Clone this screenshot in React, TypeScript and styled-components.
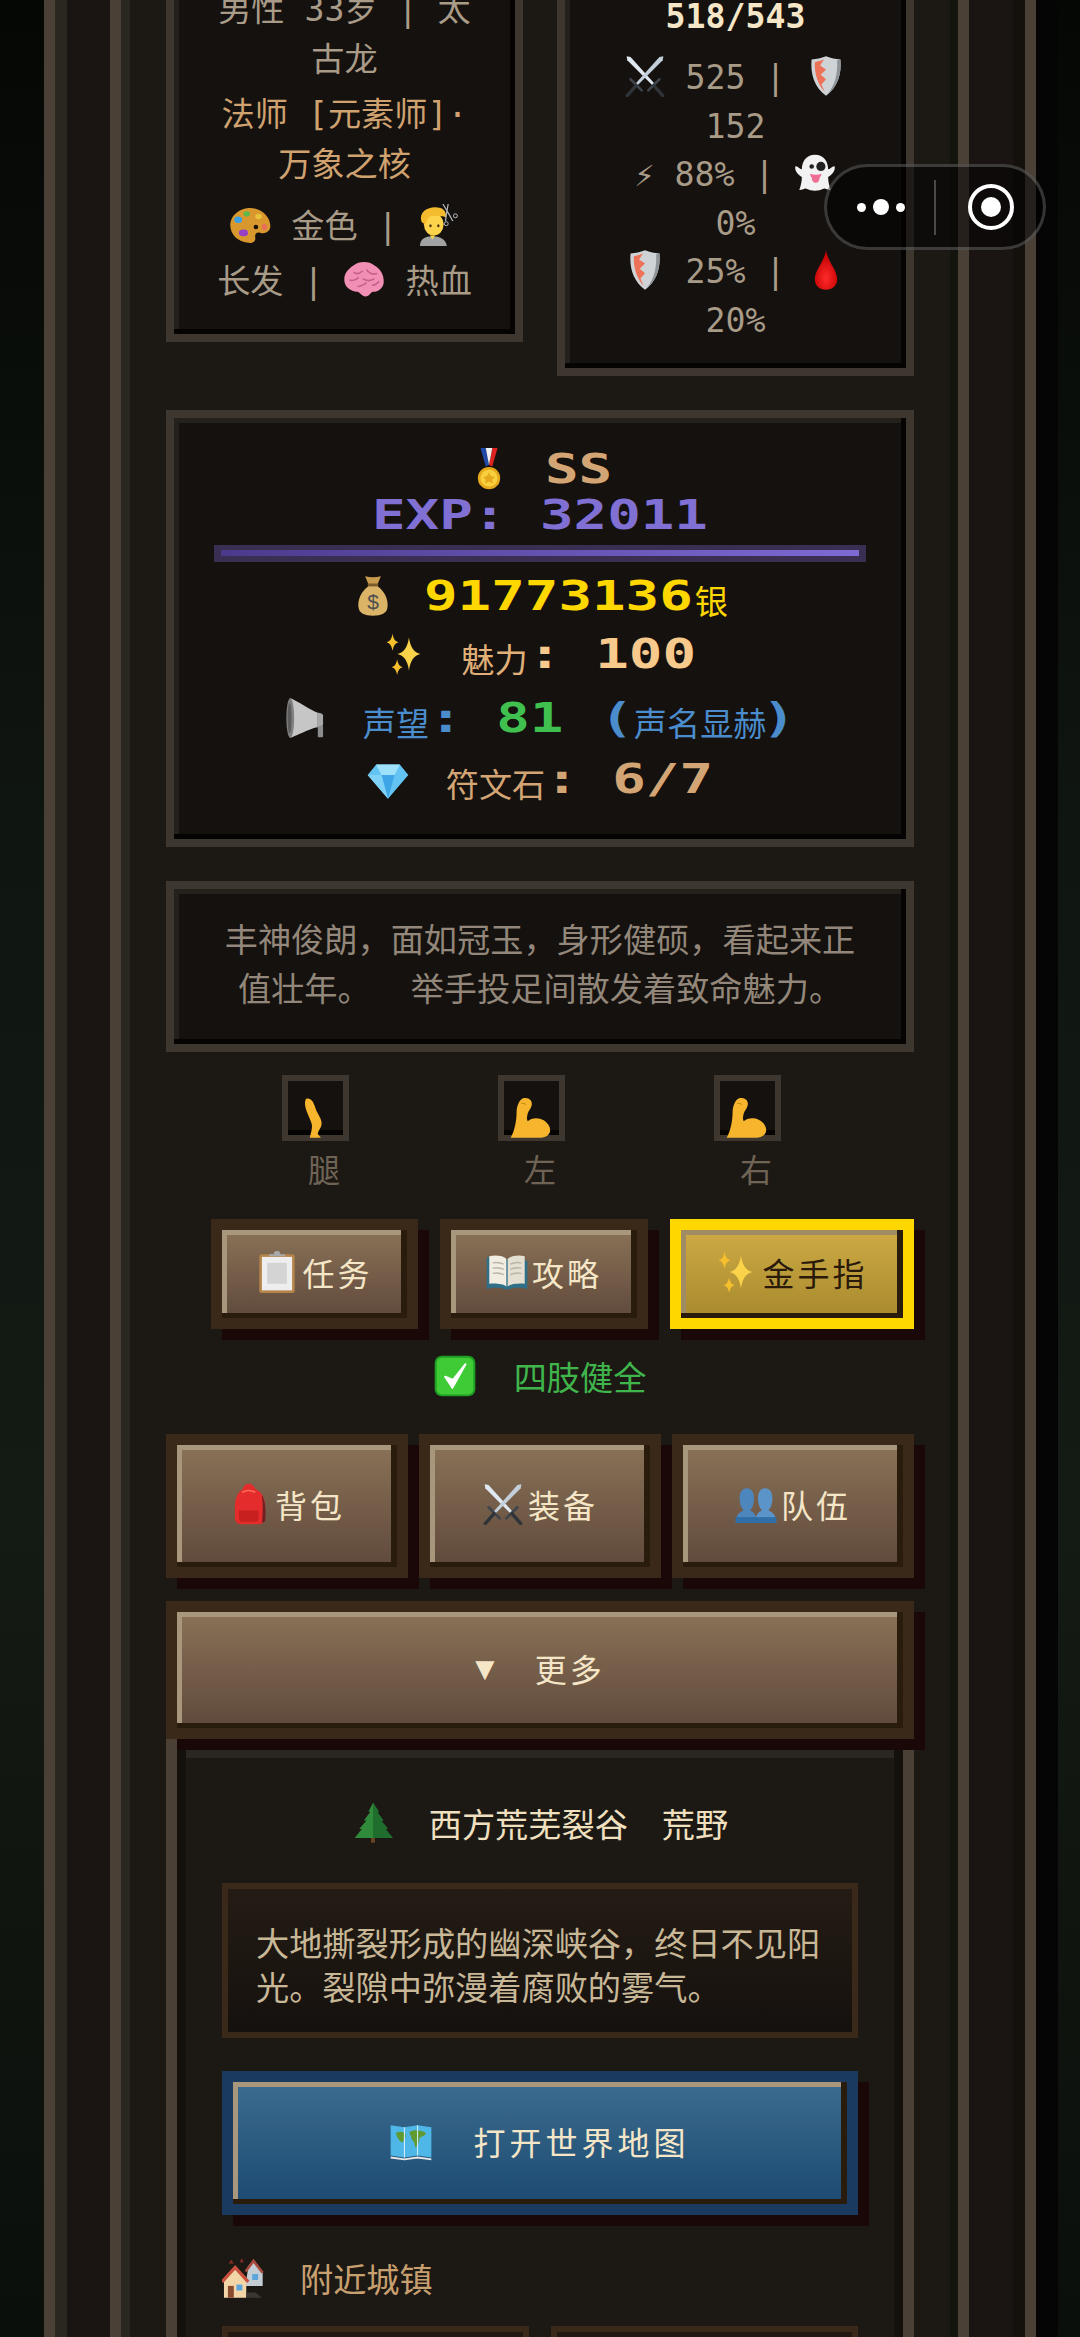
import React from "react";
import styled, { createGlobalStyle } from "styled-components";

const Global = createGlobalStyle`
  html, body { margin: 0; padding: 0; background: #0b0f0b; }
  * { box-sizing: border-box; }
`;

const FONT = `"DejaVu Sans Mono", "Noto Sans CJK SC", monospace`;

const Viewport = styled.div`
  position: relative;
  width: 1080px;
  height: 2337px;
  overflow: hidden;
  padding-left: 44px;
  font-family: ${FONT};
  font-size: 33.2px;
  background: linear-gradient(180deg, #050705 0%, #0f1510 35%, #141a14 65%, #0b0f0b 100%);
`;
const OuterFrame = styled.div`
  width: 992px;
  height: 2800px;
  margin-top: -200px;
  padding: 0 55px;
  background: #1a1412;
  border: 11px solid #4a4036;
  box-shadow: 22px 0 0 #050505, inset 12px 0 0 #2a2620, inset -12px 0 0 #14100c;
`;
const InnerFrame = styled.div`
  width: 859px;
  height: 2800px;
  padding: 118px 44px 0 45px;
  background: #1c1814;
  border: 11px solid #4a4036;
  box-shadow: inset 9px 0 0 #2a2620, inset -8px 0 0 #14140e;
`;
const TopGrid = styled.div`
  display: grid;
  grid-template-columns: 357px 357px;
  gap: 34px;
  align-items: start;
`;
const Panel = styled.div`
  border: 8px solid #3d3730;
  background: #15110e;
  box-shadow: inset -5px -5px 0 #060403, inset 5px 5px 0 #24201b;
`;
const HeroPanel = styled(Panel)`
  padding: 37px 0 27px;
  text-align: center;
  color: #a89b88;
  white-space: pre;
`;
const StatsPanel = styled(Panel)`
  padding: 44px 0 22.5px;
  text-align: center;
  color: #a89b88;
  white-space: pre;
`;
const Line = styled.div<{ $lh?: number; $mt?: number; $color?: string; $bold?: boolean }>`
  line-height: ${(p) => p.$lh ?? 50}px;
  height: ${(p) => p.$lh ?? 50}px;
  margin-top: ${(p) => p.$mt ?? 0}px;
  color: ${(p) => p.$color ?? "inherit"};
  font-weight: ${(p) => (p.$bold ? 700 : 400)};
`;
const EmojiSvg = styled.svg`
  display: inline-block;
  vertical-align: -8px;
  flex: none;
`;
const WealthPanel = styled(Panel)`
  margin-top: 34px;
  height: 437px;
  padding-top: 28px;
`;
const PixelRow = styled.div<{ $h?: number; $mt?: number; $gap?: number; $color?: string }>`
  display: flex;
  align-items: center;
  justify-content: center;
  height: ${(p) => p.$h ?? 60}px;
  margin-top: ${(p) => p.$mt ?? 0}px;
  gap: ${(p) => p.$gap ?? 0}px;
  color: ${(p) => p.$color ?? "#d4a574"};
`;
const Pixel = styled.span<{ $n: number; $color?: string; $ml?: number }>`
  display: block;
  flex: none;
  width: ${(p) => p.$n * 33.6}px;
  margin-left: ${(p) => p.$ml ?? 0}px;
  font-size: 40px;
  font-weight: 700;
  line-height: 46px;
  white-space: pre;
  color: ${(p) => p.$color ?? "inherit"};
  transform: scaleX(1.395);
  transform-origin: left center;
`;
const PixelTone = styled.span<{ $color: string }>`
  color: ${(p) => p.$color};
`;
const PixelLabel = styled.span<{ $ml?: number; $color?: string }>`
  flex: none;
  margin-top: 14px;
  margin-left: ${(p) => p.$ml ?? 0}px;
  line-height: 46px;
  color: ${(p) => p.$color ?? "inherit"};
  white-space: pre;
`;
const ExpBar = styled.div`
  width: 652px;
  height: 17px;
  margin: 7px auto 4px;
  padding: 5px 7px;
  background: #3a2e52;
`;
const ExpFill = styled.div`
  height: 6px;
  background: linear-gradient(90deg, #4b3a8c, #7d6ad4);
`;
const DescPanel = styled(Panel)`
  margin-top: 34px;
  height: 171px;
  padding-top: 27px;
  text-align: center;
  color: #92877a;
  line-height: 49px;
  white-space: pre;
`;
const LimbRow = styled.div`
  display: flex;
  justify-content: center;
  margin-top: 23px;
`;
const LimbCol = styled.div`
  width: 216px;
  display: flex;
  flex-direction: column;
  align-items: center;
`;
const LimbSlot = styled.div`
  width: 67px;
  height: 66px;
  margin-right: 18px;
  border: 6px solid #3d3730;
  background: #15110e;
  box-shadow: inset 0 -5px 0 #060403;
  display: flex;
  align-items: flex-end;
  justify-content: center;
  & > svg {
    margin-bottom: -4px;
  }
`;
const LimbLabel = styled.div`
  margin-top: 5px;
  line-height: 50px;
  font-size: 32px;
  color: #6e6354;
`;
const QuickRow = styled.div`
  display: flex;
  justify-content: flex-end;
  gap: 22px;
  margin-top: 23px;
`;
const Btn = styled.button<{ $w?: number; $h: number; $kind?: "gold" | "blue"; $ls?: number }>`
  position: relative;
  z-index: 1;
  flex: none;
  display: flex;
  align-items: center;
  justify-content: center;
  width: ${(p) => (p.$w ? `${p.$w}px` : "100%")};
  height: ${(p) => p.$h}px;
  padding: 0 0 4px;
  font-family: ${FONT};
  font-size: 32px;
  letter-spacing: ${(p) => p.$ls ?? 3}px;
  white-space: pre;
  color: ${(p) => (p.$kind === "gold" ? "#2a1a0a" : "#f5e6c8")};
  border: 11px solid ${(p) => (p.$kind === "gold" ? "#ffd700" : p.$kind === "blue" ? "#1a3a60" : "#3a2818")};
  background: ${(p) =>
    p.$kind === "gold"
      ? "linear-gradient(180deg, #cdaa44, #a88a2e)"
      : p.$kind === "blue"
      ? "linear-gradient(180deg, #3c6c8e, #1c4a72)"
      : "linear-gradient(180deg, #8a7257, #5f493b)"};
  box-shadow: inset -6px -5px 0 #2a1c0c,
    inset 5px 5px 0 ${(p) => (p.$kind === "gold" ? "#a08c64" : "#a8977c")}, 11px 11px 0 #1a0808;
`;
const BtnLabel = styled.span<{ $ml?: number }>`
  margin-left: ${(p) => p.$ml ?? 4}px;
`;
const Arrow = styled.span`
  font-size: 32px;
  letter-spacing: 0;
`;
const StatusRow = styled.div`
  display: flex;
  align-items: center;
  justify-content: center;
  gap: 38px;
  height: 50px;
  margin-top: 22px;
  color: #3fb54c;
`;
const MenuGrid = styled.div`
  display: grid;
  grid-template-columns: repeat(3, 242px);
  gap: 11px;
  margin-top: 33px;
`;
const MoreWrap = styled.div`
  margin-top: 23px;
`;
const WorldPanel = styled.div`
  height: 900px;
  padding: 48px 45px 0;
  background: #1c1814;
  border: 11px solid #4a4036;
  box-shadow: inset 9px 0 0 #14100c, inset -9px 0 0 #14100c, inset 0 8px 0 #2a2620;
`;
const PlaceRow = styled.div`
  display: flex;
  align-items: center;
  justify-content: center;
  height: 50px;
  gap: 35px;
  color: #f0e0c0;
  white-space: pre;
`;
const PlaceText = styled.span`
  word-spacing: 14px;
`;
const PlaceBox = styled.div`
  margin-top: 35px;
  height: 155px;
  padding: 34px 22px 0 28px;
  border: 6px solid #3a2818;
  background: linear-gradient(180deg, #241c14, #15110e);
  color: #c8b898;
  line-height: 44px;
  white-space: pre;
`;
const MapWrap = styled.div`
  margin-top: 33px;
`;
const NearbyRow = styled.div`
  display: flex;
  align-items: center;
  gap: 36px;
  height: 50px;
  margin-top: 38px;
  color: #c8a070;
`;
const TownGrid = styled.div`
  display: grid;
  grid-template-columns: 307px 307px;
  gap: 22px;
  margin-top: 23px;
`;
const TownCard = styled.div`
  height: 110px;
  border: 6px solid #3a2818;
  background: #1f1813;
`;
const Capsule = styled.div`
  position: absolute;
  left: 824px;
  top: 164px;
  width: 222px;
  height: 86px;
  border-radius: 43px;
  border: 3px solid rgba(255, 255, 255, 0.2);
  background: rgba(0, 0, 0, 0.5);
  display: flex;
  align-items: center;
`;
const Dots = styled.div`
  width: 107px;
  display: flex;
  align-items: center;
  justify-content: center;
  gap: 7px;
`;
const Dot = styled.span<{ $big?: boolean }>`
  width: ${(p) => (p.$big ? 16 : 9)}px;
  height: ${(p) => (p.$big ? 16 : 9)}px;
  border-radius: 50%;
  background: #fff;
`;
const CapsuleDivider = styled.span`
  width: 2px;
  height: 55px;
  background: rgba(255, 255, 255, 0.25);
`;
const Target = styled.div`
  width: 46px;
  height: 46px;
  margin-left: 32px;
  border: 4px solid #fff;
  border-radius: 50%;
  display: flex;
  align-items: center;
  justify-content: center;
`;
const TargetCore = styled.span`
  width: 20px;
  height: 20px;
  border-radius: 50%;
  background: #fff;
`;

const Em: React.FC<{ s?: number; children: React.ReactNode }> = ({ s = 42, children }) => (
  <EmojiSvg width={s} height={s} viewBox="0 0 64 64">
    {children}
  </EmojiSvg>
);
const star = (x: number, y: number, r: number) =>
  `M${x} ${y - r}Q${x + r * 0.12} ${y - r * 0.12} ${x + r * 0.7} ${y}Q${x + r * 0.12} ${y + r * 0.12} ${x} ${y + r}Q${x - r * 0.12} ${y + r * 0.12} ${x - r * 0.7} ${y}Q${x - r * 0.12} ${y - r * 0.12} ${x} ${y - r}Z`;

const Swords = ({ s }: { s?: number }) => (
  <Em s={s}>
    <path d="M4 2l6 1 37 41-3 3L5 8z" fill="#dfe8f0" />
    <path d="M60 2l-6 1-37 41 3 3L59 8z" fill="#c3cfda" />
    <path d="M37 54l17-17M27 54L10 37" stroke="#3e444b" strokeWidth="4" strokeLinecap="round" />
    <path d="M46 47l13 15M18 47L5 62" stroke="#2f343a" strokeWidth="5" strokeLinecap="round" />
  </Em>
);
const Shield = ({ s }: { s?: number }) => (
  <Em s={s}>
    <path d="M32 2c8 3 14 4 22 5 2 22-4 42-22 55C14 49 8 29 10 7c8-1 14-2 22-5z" fill="#cfd3d6" />
    <path d="M29 7l-6 9 9 6-8 8 8 7-7 8 5 11C20 46 14 28 15 11c5-1 9-2 14-4z" fill="#ee7257" />
    <path d="M54 7c2 22-4 42-22 55 14-14 18-34 17-54z" fill="#8f9498" />
  </Em>
);
const Ghost = ({ s }: { s?: number }) => (
  <Em s={s}>
    <path d="M32 4c14 0 20 11 20 22 2 2 7-6 10-4 1 6-3 12-10 16 0 8 2 14 4 20-6 0-8-3-11-2-4 2-8 3-13 3s-9-1-13-3c-3-1-5 2-11 2 2-6 4-12 4-20C5 34 1 28 2 22c3-2 8 6 10 4 0-11 6-22 20-22z" fill="#f2f2f2" />
    <circle cx="27" cy="22" r="3.5" fill="#222" />
    <circle cx="41" cy="22" r="7" fill="#222" />
    <path d="M24 33c6 2 12 2 18 0-1 4-2 5-3 6 0 5-2 8-6 8s-6-4-6-8c-1-1-2-3-3-6z" fill="#ef6e94" />
  </Em>
);
const Drop = ({ s }: { s?: number }) => (
  <Em s={s}>
    <defs>
      <radialGradient id="dropG" cx="0.5" cy="0.7" r="0.6">
        <stop offset="0" stopColor="#ff2b2b" />
        <stop offset="1" stopColor="#c40000" />
      </radialGradient>
    </defs>
    <path d="M32 2c3 18 17 30 17 44 0 10-8 16-17 16s-17-6-17-16C15 32 29 20 32 2z" fill="url(#dropG)" />
  </Em>
);
const Palette = ({ s }: { s?: number }) => (
  <Em s={s}>
    <path d="M30 6c16-1 33 11 33 28 0 8-8 12-15 10-6-2-9 2-8 7 1 7-5 9-11 8C12 57 1 45 2 30 3 17 16 7 30 6z" fill="#d8982e" />
    <ellipse cx="14" cy="24" rx="6" ry="5" fill="#3aa0e6" />
    <ellipse cx="27" cy="15" rx="5" ry="4" fill="#5cb84a" />
    <ellipse cx="45" cy="19" rx="5" ry="4" fill="#e8c43a" />
    <ellipse cx="54" cy="35" rx="4" ry="5" fill="#e8705a" />
    <ellipse cx="22" cy="44" rx="7" ry="5" fill="#9640c8" />
    <circle cx="41" cy="35" r="3.5" fill="#1a1008" />
  </Em>
);
const Haircut = ({ s }: { s?: number }) => (
  <Em s={s}>
    <path d="M3 64c0-11 8-15 19-15s20 4 22 15z" fill="#a2a2a2" />
    <path d="M22 48h-4l4 6 4-6z" fill="#fcd34a" />
    <ellipse cx="24" cy="31" rx="15" ry="17" fill="#fcd34a" />
    <path d="M5 26C1 9 20 2 34 6c7 2 9 8 9 14-8-2-14-2-23-2-4 2-7 6-8 13-3-1-6-2-7-5z" fill="#f5bb2e" />
    <ellipse cx="19" cy="33" rx="1.8" ry="2.3" fill="#4a3008" />
    <ellipse cx="31" cy="33" rx="1.8" ry="2.3" fill="#4a3008" />
    <path d="M38 0l10 17 5 9M46 0l-3 17-1 9" stroke="#b8bcc0" strokeWidth="1.8" fill="none" />
    <circle cx="57" cy="18" r="3" stroke="#b8bcc0" strokeWidth="1.5" fill="none" />
    <circle cx="43" cy="30" r="3" stroke="#b8bcc0" strokeWidth="1.5" fill="none" />
  </Em>
);
const Brain = ({ s }: { s?: number }) => (
  <Em s={s}>
    <path d="M16 10c8-7 24-7 32 0 8 4 15 14 14 26-1 8-8 14-16 14-4 0-5 7-12 7-5 0-7-5-12-7C10 49 1 41 2 30c0-8 7-16 14-20z" fill="#f28fb4" />
    <path d="M16 20c5 4 10 2 14-2M36 16c2 6 10 8 16 6M10 32c6 2 10 0 14-4M30 30c6 4 12 4 18 0M22 42c6 0 10-3 14-6M44 40c4 0 8-2 11-6" stroke="#c75f8c" strokeWidth="2.4" fill="none" />
  </Em>
);
const Medal = ({ s }: { s?: number }) => (
  <Em s={s}>
    <path d="M19 0h8l5 26-5 2z" fill="#1f49a8" />
    <path d="M45 0h-8l-5 26 5 2z" fill="#d22" />
    <path d="M27 0h10l-5 26z" fill="#f2f2f2" />
    <circle cx="32" cy="46" r="17" fill="#e6a81c" />
    <circle cx="32" cy="46" r="13" fill="#f8cf3c" />
    <path d="M32 37l3 6 6 1-4 4 1 6-6-3-6 3 1-6-4-4 6-1z" fill="#e6a81c" />
  </Em>
);
const Bag = ({ s }: { s?: number }) => (
  <Em s={s}>
    <path d="M20 2c8 2 16 2 24 0l-5 12H25z" fill="#c99b4e" />
    <rect x="24" y="13" width="16" height="4" fill="#7a5a2a" />
    <path d="M25 17h14c11 8 17 21 15 33-1 8-9 12-22 12s-21-4-22-12c-2-12 4-25 15-33z" fill="#dcb468" />
    <text x="32" y="52" textAnchor="middle" fontSize="32" fontFamily="Liberation Sans, sans-serif" fill="#4f4f4f">$</text>
  </Em>
);
const Sparkles = ({ s }: { s?: number }) => (
  <Em s={s}>
    <path d={star(38, 32, 25)} fill="#fbd34a" />
    <path d={star(13, 14, 13)} fill="#f5bf2e" />
    <path d={star(20, 52, 12)} fill="#f5bf2e" />
  </Em>
);
const Megaphone = ({ s }: { s?: number }) => (
  <Em s={s}>
    <path d="M8 2C16 4 42 22 50 24v22C42 46 16 60 8 62z" fill="#c6c6c6" />
    <path d="M50 24c4 0 8 2 8 4v14c0 2-4 4-8 4z" fill="#a8a8a8" />
    <path d="M44 46h6v14c0 2 8 2 8 0V44h-4" fill="#8c8c8c" />
    <ellipse cx="8" cy="32" rx="6" ry="30" fill="#7f7f7f" />
    <ellipse cx="7" cy="32" rx="3" ry="23" fill="#5a5a5a" />
  </Em>
);
const Gem = ({ s }: { s?: number }) => (
  <Em s={s}>
    <path d="M14 10h36l13 16-31 36L1 26z" fill="#63c3f2" />
    <path d="M14 10l8 16h20l8-16z" fill="#9fe0fb" />
    <path d="M22 26h20L32 62z" fill="#3fa6e6" />
    <path d="M1 26h21l10 36z" fill="#7fd1f6" />
  </Em>
);
const Leg = ({ s }: { s?: number }) => (
  <Em s={s}>
    <path d="M18 3c7-3 12 4 15 15 3 9 10 15 9 24-1 6-5 9-6 14l5 6H24l2-8c1-5 2-9 1-13C24 30 13 14 18 3z" fill="#f6b52c" />
  </Em>
);
const Bicep = ({ s }: { s?: number }) => (
  <Em s={s}>
    <path d="M20 2c8-2 15 3 13 11-1 5-5 8-6 12-1 4-2 8 0 12 8-8 27-6 33 8 4 9-2 17-14 17H1c6-10 9-26 9-38 0-9 4-20 10-22z" fill="#f6b52c" />
    <path d="M17 10c3-1 6 0 7 2" stroke="#c98a14" strokeWidth="1.6" fill="none" />
  </Em>
);
const Clipboard = ({ s }: { s?: number }) => (
  <Em s={s}>
    <rect x="5" y="5" width="54" height="59" rx="3" fill="#b5844a" />
    <rect x="9" y="9" width="46" height="51" fill="#eeeeee" />
    <rect x="17" y="18" width="30" height="32" fill="#d4d4d4" />
    <path d="M20 8h24V5h-7a5 5 0 0 0-10 0h-7z" fill="#a8a8a8" />
  </Em>
);
const Book = ({ s }: { s?: number }) => (
  <Em s={s}>
    <path d="M1 10c10-2 22-2 31 3 9-5 21-5 31 3v42c-10-3-22-3-31 1-9-4-21-4-31-1z" fill="#2f6f88" />
    <path d="M5 8c9-2 21-1 26 4v42c-5-4-17-5-26-4z" fill="#f1ede2" />
    <path d="M59 8c-9-2-21-1-26 4v42c5-4 17-5 26-4z" fill="#e4dfd0" />
    <path d="M10 18c6-1 13 0 17 2M10 26c6-1 13 0 17 2M10 34c6-1 13 0 17 2M37 20c4-2 11-3 17-2M37 28c4-2 11-3 17-2M37 36c4-2 11-3 17-2" stroke="#b8b4a8" strokeWidth="2" fill="none" />
  </Em>
);
const Check = ({ s }: { s?: number }) => (
  <Em s={s}>
    <rect x="1" y="1" width="62" height="62" rx="11" fill="#1f9e24" />
    <rect x="4" y="4" width="56" height="56" rx="8" fill="#3fcb36" />
    <path d="M17 33l11 17 20-36-19 24z" fill="#fff" stroke="#fff" strokeWidth="3" strokeLinejoin="round" />
  </Em>
);
const Backpack = ({ s }: { s?: number }) => (
  <Em s={s}>
    <path d="M30 1c5 0 9 4 10 8 10 4 15 14 15 26v18c0 6-4 10-10 10H19c-6 0-10-4-10-10V35c0-12 5-22 12-26 1-4 4-8 9-8z" fill="#e52c2c" />
    <path d="M50 18c5 8 7 24 5 40l-5 3c2-14 2-30 0-43z" fill="#702020" />
    <path d="M15 42h30v12c0 3-3 5-6 5H21c-3 0-6-2-6-5z" fill="#c81f1f" />
    <path d="M20 14c6-3 14-3 20 0" stroke="#ff6a5a" strokeWidth="2.4" fill="none" />
  </Em>
);
const Busts = ({ s }: { s?: number }) => (
  <Em s={s}>
    <path d="M1 60c0-12 7-16 12-18-4-5-6-11-6-18C7 14 11 8 18 8s11 6 11 16c0 7-2 13-6 18 5 2 10 6 10 18z" fill="#4d86bd" />
    <path d="M31 60c0-12 5-16 10-18-4-5-6-11-6-18 0-10 4-16 11-16s11 6 11 16c0 7-2 13-6 18 5 2 12 6 12 18z" fill="#5a94c8" />
    <rect x="1" y="52" width="62" height="9" fill="#2f6ea6" />
  </Em>
);
const Tree = ({ s }: { s?: number }) => (
  <Em s={s}>
    <rect x="29" y="52" width="6" height="10" fill="#6a4422" />
    <path d="M32 1l9 14-3 0 10 13-4 0 11 13-4 0 11 14H4l11-14-4 0 11-13-4 0 10-13-3 0z" fill="#2f8a3c" />
    <path d="M32 1l9 14-3 0 10 13-4 0 11 13-4 0 11 14H32z" fill="#1f6e2e" />
  </Em>
);
const MapIcon = ({ s }: { s?: number }) => (
  <Em s={s}>
    <path d="M1 8l21 3 20-3 21 3v46l-21-3-20 3-21-3z" fill="#4fb6e8" />
    <path d="M9 20c6-4 13-2 15 2 1 5-4 6-4 12-4 1-10-8-11-14zM30 18c5-3 17-4 25 2-3 6-8 4-10 8-1 8-4 12-6 14-2-4-1-10-6-12 0-6-4-8-3-12z" fill="#5f9b32" />
    <path d="M22 11v46M42 8v46" stroke="#d4eefa" strokeWidth="1.6" />
    <path d="M1 57l21 3 20-3 21 3" stroke="#e6e6e6" strokeWidth="3" fill="none" />
  </Em>
);
const Houses = ({ s }: { s?: number }) => (
  <Em s={s}>
    <path d="M40 14l8-10 14 18v22H36z" fill="#c4ccd4" />
    <path d="M36 22l12-16 14 18" stroke="#a84a3e" strokeWidth="4" fill="none" />
    <rect x="46" y="26" width="9" height="9" fill="#5aa6dc" />
    <path d="M3 36L20 18l17 18v26H3z" fill="#f2d6a8" />
    <path d="M0 38L20 16l20 22" stroke="#c8503e" strokeWidth="5" fill="none" />
    <rect x="9" y="44" width="9" height="18" fill="#8a4a2e" />
    <rect x="22" y="42" width="9" height="9" fill="#5aa6dc" />
    <path d="M14 4l4 6h-8zM30 2l3 6h-6z" fill="#8a2e28" />
    <path d="M37 62h24l-10-8H37z" fill="#3a3632" />
  </Em>
);

export default function App() {
  return (
    <Viewport>
      <Global />
      <OuterFrame>
        <InnerFrame>
          <TopGrid>
            <HeroPanel>
              <Line>男性 33岁 | 太</Line>
              <Line>古龙</Line>
              <Line $mt={5} $color="#cfa270">法师 [元素师]·</Line>
              <Line $color="#cfa270">万象之核</Line>
              <Line $mt={12}><Palette /> 金色 | <Haircut /></Line>
              <Line $mt={5}>长发 | <Brain /> 热血</Line>
            </HeroPanel>
            <StatsPanel>
              <Line $bold $color="#f5e6c8">518/543</Line>
              <Line $lh={48.5} $mt={12}><Swords /> 525 | <Shield /></Line>
              <Line $lh={48.5}>152</Line>
              <Line $lh={48.5}>⚡ 88% | <Ghost /></Line>
              <Line $lh={48.5}>0%</Line>
              <Line $lh={48.5}><Shield /> 25% | <Drop /></Line>
              <Line $lh={48.5}>20%</Line>
            </StatsPanel>
          </TopGrid>

          <WealthPanel>
            <PixelRow $h={46} $gap={35}>
              <Medal />
              <Pixel $n={2}>SS</Pixel>
            </PixelRow>
            <PixelRow $h={46}>
              <Pixel $n={10} $color="#8070d4">EXP: 32011</Pixel>
            </PixelRow>
            <ExpBar><ExpFill /></ExpBar>
            <PixelRow $color="#ffd700">
              <Bag />
              <Pixel $n={8} $ml={30}>91773136</Pixel>
              <PixelLabel $ml={2}>银</PixelLabel>
            </PixelRow>
            <PixelRow $mt={-2} $color="#e0b078">
              <Sparkles />
              <PixelLabel $ml={35}>魅力</PixelLabel>
              <Pixel $n={5} $color="#f7c98c">: 100</Pixel>
            </PixelRow>
            <PixelRow $mt={4} $color="#4a8ccc">
              <Megaphone />
              <PixelLabel $ml={36}>声望</PixelLabel>
              <Pixel $n={5}>: <PixelTone $color="#3fc04f">81</PixelTone> </Pixel>
              <Pixel $n={1} $ml={3}>(</Pixel>
              <PixelLabel>声名显赫</PixelLabel>
              <Pixel $n={1} $ml={-5}>)</Pixel>
            </PixelRow>
            <PixelRow $mt={1} $color="#d4a574">
              <Gem />
              <PixelLabel $ml={37}>符文石</PixelLabel>
              <Pixel $n={5}>: 6/7</Pixel>
            </PixelRow>
          </WealthPanel>

          <DescPanel>
            丰神俊朗，面如冠玉，身形健硕，看起来正{"\n"}值壮年。{"\u00a0\u00a0"}举手投足间散发着致命魅力。
          </DescPanel>

          <LimbRow>
            <LimbCol>
              <LimbSlot><Leg /></LimbSlot>
              <LimbLabel>腿</LimbLabel>
            </LimbCol>
            <LimbCol>
              <LimbSlot><Bicep /></LimbSlot>
              <LimbLabel>左</LimbLabel>
            </LimbCol>
            <LimbCol>
              <LimbSlot><Bicep /></LimbSlot>
              <LimbLabel>右</LimbLabel>
            </LimbCol>
          </LimbRow>

          <QuickRow>
            <Btn $w={207} $h={110}><Clipboard /><BtnLabel>任务</BtnLabel></Btn>
            <Btn $w={208} $h={110}><Book /><BtnLabel>攻略</BtnLabel></Btn>
            <Btn $w={244} $h={110} $kind="gold"><Sparkles /><BtnLabel>金手指</BtnLabel></Btn>
          </QuickRow>

          <StatusRow><Check /><span>四肢健全</span></StatusRow>

          <MenuGrid>
            <Btn $h={144}><Backpack /><BtnLabel>背包</BtnLabel></Btn>
            <Btn $h={144}><Swords /><BtnLabel>装备</BtnLabel></Btn>
            <Btn $h={144}><Busts /><BtnLabel>队伍</BtnLabel></Btn>
          </MenuGrid>

          <MoreWrap>
            <Btn $h={138}><Arrow>▼</Arrow><BtnLabel $ml={40}>更多</BtnLabel></Btn>
          </MoreWrap>

          <WorldPanel>
            <PlaceRow>
              <Tree />
              <PlaceText>西方荒芜裂谷 荒野</PlaceText>
            </PlaceRow>
            <PlaceBox>
              大地撕裂形成的幽深峡谷，终日不见阳{"\n"}光。裂隙中弥漫着腐败的雾气。
            </PlaceBox>
            <MapWrap>
              <Btn $h={144} $kind="blue" $ls={4}><MapIcon /><BtnLabel $ml={41}>打开世界地图</BtnLabel></Btn>
            </MapWrap>
            <NearbyRow>
              <Houses />
              <span>附近城镇</span>
            </NearbyRow>
            <TownGrid>
              <TownCard />
              <TownCard />
            </TownGrid>
          </WorldPanel>
        </InnerFrame>
      </OuterFrame>
      <Capsule>
        <Dots><Dot /><Dot $big /><Dot /></Dots>
        <CapsuleDivider />
        <Target><TargetCore /></Target>
      </Capsule>
    </Viewport>
  );
}
